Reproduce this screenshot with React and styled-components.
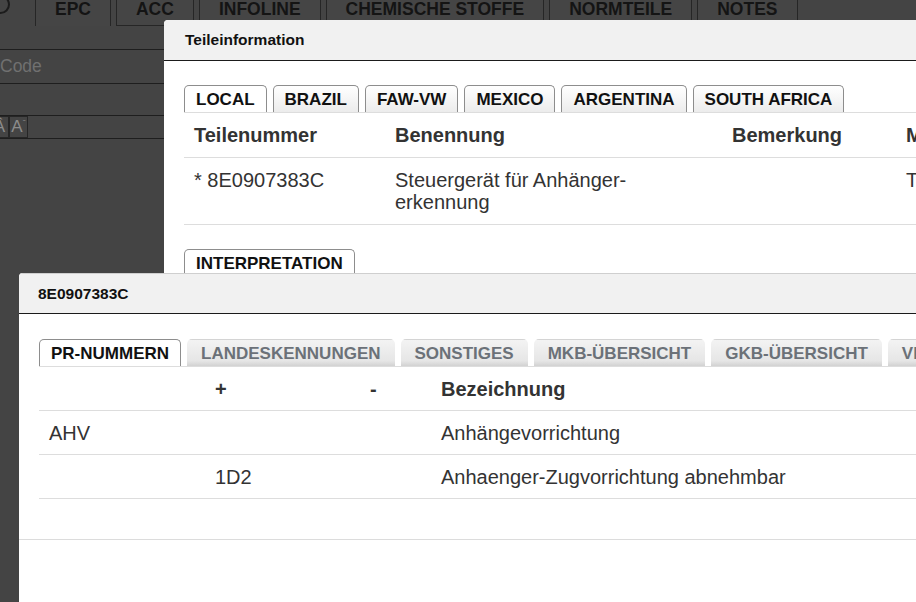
import React from "react";
import styled, { createGlobalStyle } from "styled-components";

const GlobalStyle = createGlobalStyle`
  html, body {
    margin: 0;
    padding: 0;
    background: #444444;
    font-family: "Liberation Sans", Arial, sans-serif;
    overflow: hidden;
  }
`;

const navTabs = ["EPC", "ACC", "INFOLINE", "CHEMISCHE STOFFE", "NORMTEILE", "NOTES"];
const regions = ["LOCAL", "BRAZIL", "FAW-VW", "MEXICO", "ARGENTINA", "SOUTH AFRICA"];
const prTabs = ["PR-NUMMERN", "LANDESKENNUNGEN", "SONSTIGES", "MKB-ÜBERSICHT", "GKB-ÜBERSICHT", "VERWENDUNG"];

const App = () => {
  return (
    <Page>
      <GlobalStyle />
      <TopNav>
        <NavIconSlot>
          <RoundIcon />
        </NavIconSlot>
        {navTabs.map((t, i) => (
          <NavTab key={t} $active={i === 0}>
            {t}
          </NavTab>
        ))}
      </TopNav>

      <SidePanel>
        <PanelRow $h={23} />
        <PanelRow $h={33}>
          <Placeholder>Code</Placeholder>
        </PanelRow>
        <PanelRow $h={31} />
        <PanelRow $h={22}>
          <FontBtn $first>Â</FontBtn>
          <FontBtn>
            A<small>ˉ</small>
          </FontBtn>
        </PanelRow>
      </SidePanel>

      <PartModal>
        <ModalHeader>Teileinformation</ModalHeader>
        <ModalBody $pad="24px 20px 0">
          <TabList>
            {regions.map((r, i) => (
              <Tab key={r} $active={i === 0}>
                {r}
              </Tab>
            ))}
          </TabList>
          <Table>
            <thead>
              <tr>
                <Th $w={201}>Teilenummer</Th>
                <Th $w={337}>Benennung</Th>
                <Th $w={174}>Bemerkung</Th>
                <Th>Menge</Th>
              </tr>
            </thead>
            <tbody>
              <tr>
                <Td>* 8E0907383C</Td>
                <Td $pr={40}>Steuergerät für Anhänger-erkennung</Td>
                <Td />
                <Td>TN</Td>
              </tr>
            </tbody>
          </Table>
          <InterpTabs>
            <Tab $active>INTERPRETATION</Tab>
          </InterpTabs>
        </ModalBody>
      </PartModal>

      <PrModal>
        <ModalHeader $top>8E0907383C</ModalHeader>
        <ModalBody $pad="25px 20px 40px">
          <TabList>
            {prTabs.map((t, i) => (
              <Tab key={t} $active={i === 0} $muted={i !== 0}>
                {t}
              </Tab>
            ))}
          </TabList>
          <Table $compact>
            <thead>
              <tr>
                <Th $w={166}></Th>
                <Th $w={155}>+</Th>
                <Th $w={71}>-</Th>
                <Th>Bezeichnung</Th>
              </tr>
            </thead>
            <tbody>
              <tr>
                <Td>AHV</Td>
                <Td />
                <Td />
                <Td>Anhängevorrichtung</Td>
              </tr>
              <tr>
                <Td />
                <Td>1D2</Td>
                <Td />
                <Td>Anhaenger-Zugvorrichtung abnehmbar</Td>
              </tr>
            </tbody>
          </Table>
        </ModalBody>
        <ModalFooter />
      </PrModal>
    </Page>
  );
};

export default App;

const Page = styled.div`
  position: relative;
  width: 916px;
  height: 602px;
  overflow: hidden;
  background: #444444;
`;

const TopNav = styled.div`
  display: flex;
  gap: 5px;
  height: 26px;
  overflow: hidden;
`;

const NavIconSlot = styled.div`
  width: 30px;
  position: relative;
  overflow: hidden;
`;

const RoundIcon = styled.span`
  position: absolute;
  left: -9px;
  top: -5px;
  width: 15px;
  height: 15px;
  border: 2px solid #1c1c1c;
  border-radius: 50%;
`;

const NavTab = styled.div`
  height: 26px;
  box-sizing: border-box;
  padding: 1px 19px 0;
  line-height: 16px;
  font-size: 17.5px;
  font-weight: bold;
  color: #141414;
  border: 1px solid #262626;
  border-top: none;
  border-bottom: ${(p) => (p.$active ? "none" : "1px solid #262626")};
  background: #454545;
  white-space: nowrap;
`;

const SidePanel = styled.div`
  width: 916px;
`;

const PanelRow = styled.div`
  display: flex;
  align-items: center;
  height: ${(p) => p.$h}px;
  border-bottom: 1px solid #1e1e1e;
`;

const Placeholder = styled.span`
  font-size: 17.5px;
  color: #707070;
`;

const FontBtn = styled.span`
  display: flex;
  align-items: center;
  justify-content: center;
  box-sizing: border-box;
  height: 22px;
  width: 19px;
  margin-left: ${(p) => (p.$first ? "-10px" : "0")};
  border: 1px solid #262626;
  font-size: 17px;
  color: #8c8c8c;
  small {
    font-size: 9px;
    align-self: flex-start;
    margin-top: 1px;
  }
`;

const PartModal = styled.div`
  position: absolute;
  left: 164px;
  top: 20px;
  width: 800px;
  height: 600px;
  background: #ffffff;
  border-radius: 4px 0 0 0;
  overflow: hidden;
`;

const PrModal = styled.div`
  position: absolute;
  left: 19px;
  top: 273px;
  width: 960px;
  height: 400px;
  background: #ffffff;
  border-radius: 4px 0 0 0;
  overflow: hidden;
`;

const ModalHeader = styled.div`
  height: 41px;
  box-sizing: border-box;
  display: flex;
  align-items: center;
  padding-left: ${(p) => (p.$top ? "19px" : "21px")};
  background: #f1f1f1;
  border-top: ${(p) => (p.$top ? "1px solid #cfcfcf" : "none")};
  border-bottom: 1px solid #1b1b1b;
  font-size: 15.5px;
  font-weight: bold;
  color: #111111;
`;

const ModalBody = styled.div`
  padding: ${(p) => p.$pad};
`;

const ModalFooter = styled.div`
  border-top: 1px solid #dcdcdc;
  height: 80px;
`;

const TabList = styled.div`
  display: flex;
  gap: 6px;
  border-bottom: 1px solid #dddddd;
`;

const InterpTabs = styled(TabList)`
  margin-top: 24px;
`;

const Tab = styled.div`
  height: 27px;
  box-sizing: border-box;
  padding: ${(p) => (p.$muted ? "1px 13px 0" : "1px 11px 0")};
  display: flex;
  align-items: center;
  font-size: 17px;
  font-weight: bold;
  white-space: nowrap;
  border-radius: 5px 5px 0 0;
  color: ${(p) => (p.$muted ? "#6b7178" : "#111111")};
  border: 1px solid ${(p) => (p.$muted ? "transparent" : "#8d8d8d")};
  border-bottom: none;
  background: ${(p) =>
    p.$active
      ? "#ffffff"
      : p.$muted
      ? "linear-gradient(#f3f3f3, #e6e6e6 80%, #d2d2d2)"
      : "linear-gradient(#ffffff, #ececec)"};
`;

const Table = styled.table`
  border-collapse: collapse;
  table-layout: fixed;
  width: 100%;
  font-size: 20px;
  color: #333333;
  th,
  td {
    padding: ${(p) => (p.$compact ? "11px 10px 10px" : "11px 10px")};
  }
`;

const Th = styled.th`
  width: ${(p) => (p.$w ? `${p.$w}px` : "auto")};
  box-sizing: border-box;
  text-align: left;
  font-weight: bold;
  line-height: 22px;
  border-bottom: 1px solid #dddddd;
  white-space: nowrap;
  overflow: hidden;
`;

const Td = styled.td`
  text-align: left;
  vertical-align: top;
  line-height: 22px;
  border-bottom: 1px solid #dddddd;
  padding-right: ${(p) => (p.$pr ? `${p.$pr}px` : "10px")} !important;
`;
